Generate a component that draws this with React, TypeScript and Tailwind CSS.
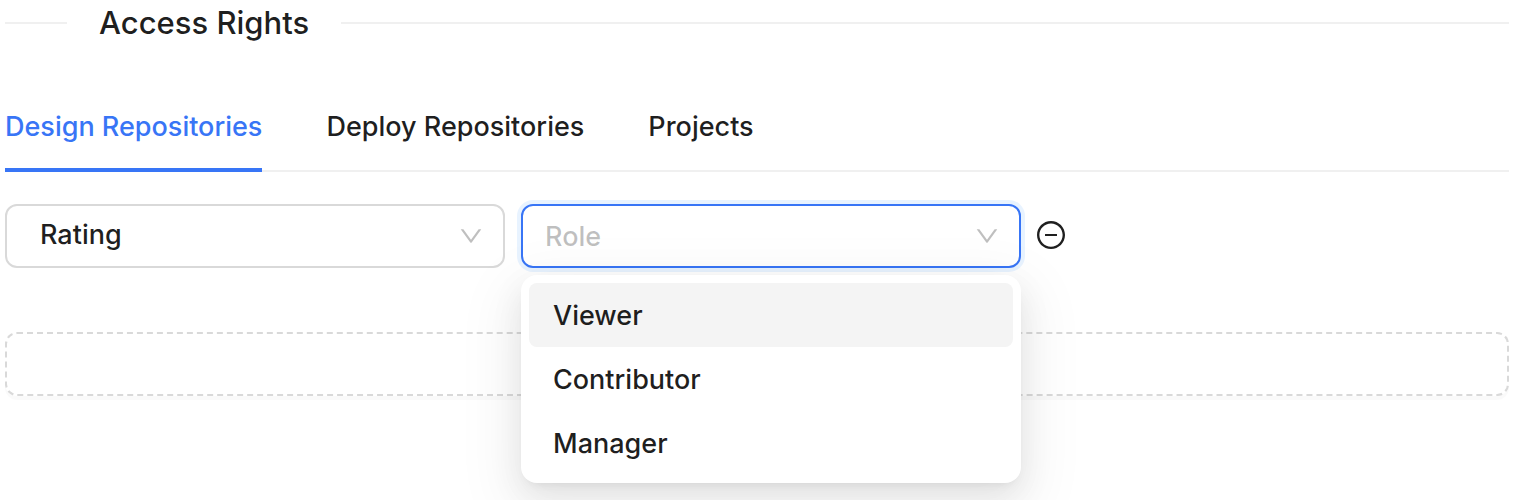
import { useState } from "react";

const tabs = ["Design Repositories", "Deploy Repositories", "Projects"];
const roles = ["Viewer", "Contributor", "Manager"];

function ChevronDown() {
  return (
    <svg
      viewBox="64 64 896 896"
      className="pointer-events-none absolute top-5 right-[22px] size-6 fill-black/25"
      aria-hidden="true"
    >
      <path d="M884 256h-75c-5.1 0-9.9 2.5-12.9 6.6L512 654.2 227.9 262.6c-3-4.1-7.8-6.6-12.9-6.6h-75c-6.5 0-10.3 7.4-6.5 12.7l352.6 486.1c12.8 17.6 39 17.6 51.7 0l352.6-486.1c3.9-5.3.1-12.7-6.4-12.7z" />
    </svg>
  );
}

function MinusCircle() {
  return (
    <svg viewBox="64 64 896 896" className="size-7 fill-current" aria-hidden="true">
      <path d="M696 480H328c-4.4 0-8 3.6-8 8v48c0 4.4 3.6 8 8 8h368c4.4 0 8-3.6 8-8v-48c0-4.4-3.6-8-8-8z" />
      <path d="M512 64C264.6 64 64 264.6 64 512s200.6 448 448 448 448-200.6 448-448S759.4 64 512 64zm0 820c-205.4 0-372-166.6-372-372s166.6-372 372-372 372 166.6 372 372-166.6 372-372 372z" />
    </svg>
  );
}

export default function App() {
  const [tab, setTab] = useState(tabs[0]);
  const [role, setRole] = useState("");
  const [open, setOpen] = useState(true);

  return (
    <main className="min-h-screen bg-white pr-7 pb-6 pl-[5px] font-['Inter',sans-serif] text-[27px] leading-11 font-[450] text-black/88">
      <header className="flex items-center gap-8 pt-px">
        <span className="h-0.5 w-[62px] bg-[#f0f0f0]" />
        <h1 className="text-[31px] font-medium">Access Rights</h1>
        <span className="h-0.5 flex-1 bg-[#f0f0f0]" />
      </header>

      <nav className="mt-[60px] flex gap-16 border-b-2 border-[#f0f0f0]" role="tablist">
        {tabs.map((name) => (
          <button
            key={name}
            type="button"
            role="tab"
            aria-selected={name === tab}
            onClick={() => setTab(name)}
            className={
              name === tab
                ? "-mb-0.5 border-b-4 border-[#3875f6] pb-[19px] text-[#3875f6]"
                : "-mb-0.5 border-b-4 border-transparent pb-[19px]"
            }
          >
            {name}
          </button>
        ))}
      </nav>

      <div className="mt-8 flex items-center gap-4">
        <div className="relative w-[500px]">
          <select
            aria-label="Repository"
            className="block h-16 w-full appearance-none rounded-xl border-2 border-[#d9d9d9] bg-white pr-14 pb-0.5 pl-[33px] outline-none"
          >
            <option>Rating</option>
          </select>
          <ChevronDown />
        </div>

        <div className="relative w-[500px]">
          <select
            aria-label="Role"
            value={role}
            onChange={(e) => setRole(e.target.value)}
            className={
              role
                ? "block h-16 w-full appearance-none rounded-xl border-2 border-[#3875f6] bg-white pt-0.5 pr-14 pl-[22px] shadow-[0_0_0_4px_rgba(5,125,255,0.09)] outline-none"
                : "block h-16 w-full appearance-none rounded-xl border-2 border-[#3875f6] bg-white pt-0.5 pr-14 pl-[22px] text-black/25 shadow-[0_0_0_4px_rgba(5,125,255,0.09)] outline-none"
            }
          >
            <option value="" hidden>
              Role
            </option>
            {roles.map((name) => (
              <option key={name}>{name}</option>
            ))}
          </select>
          <ChevronDown />
          {open && (
            <div
              role="listbox"
              aria-label="Role options"
              className="absolute top-full right-0 left-0 z-10 mt-[7px] flex flex-col rounded-2xl bg-white p-2 shadow-[0_12px_32px_0_rgba(0,0,0,0.08),0_6px_12px_-8px_rgba(0,0,0,0.12),0_18px_56px_16px_rgba(0,0,0,0.05)]"
            >
              {roles.map((name, i) => (
                <button
                  key={name}
                  type="button"
                  role="option"
                  aria-selected={name === role}
                  onClick={() => {
                    setRole(name);
                    setOpen(false);
                  }}
                  className={
                    i === 0
                      ? "h-16 rounded-lg bg-[#f4f4f4] px-6 pt-0.5 text-left"
                      : "h-16 rounded-lg px-6 pt-0.5 text-left hover:bg-[#f4f4f4]"
                  }
                >
                  {name}
                </button>
              ))}
            </div>
          )}
        </div>

        <button type="button" aria-label="Remove" className="pb-0.5">
          <MinusCircle />
        </button>
      </div>

      <button
        type="button"
        aria-label="Add"
        className="mt-16 block h-16 w-full rounded-xl border-2 border-dashed border-[#d9d9d9] bg-white shadow-[0_4px_0_0_rgba(0,0,0,0.02)]"
      />
    </main>
  );
}
